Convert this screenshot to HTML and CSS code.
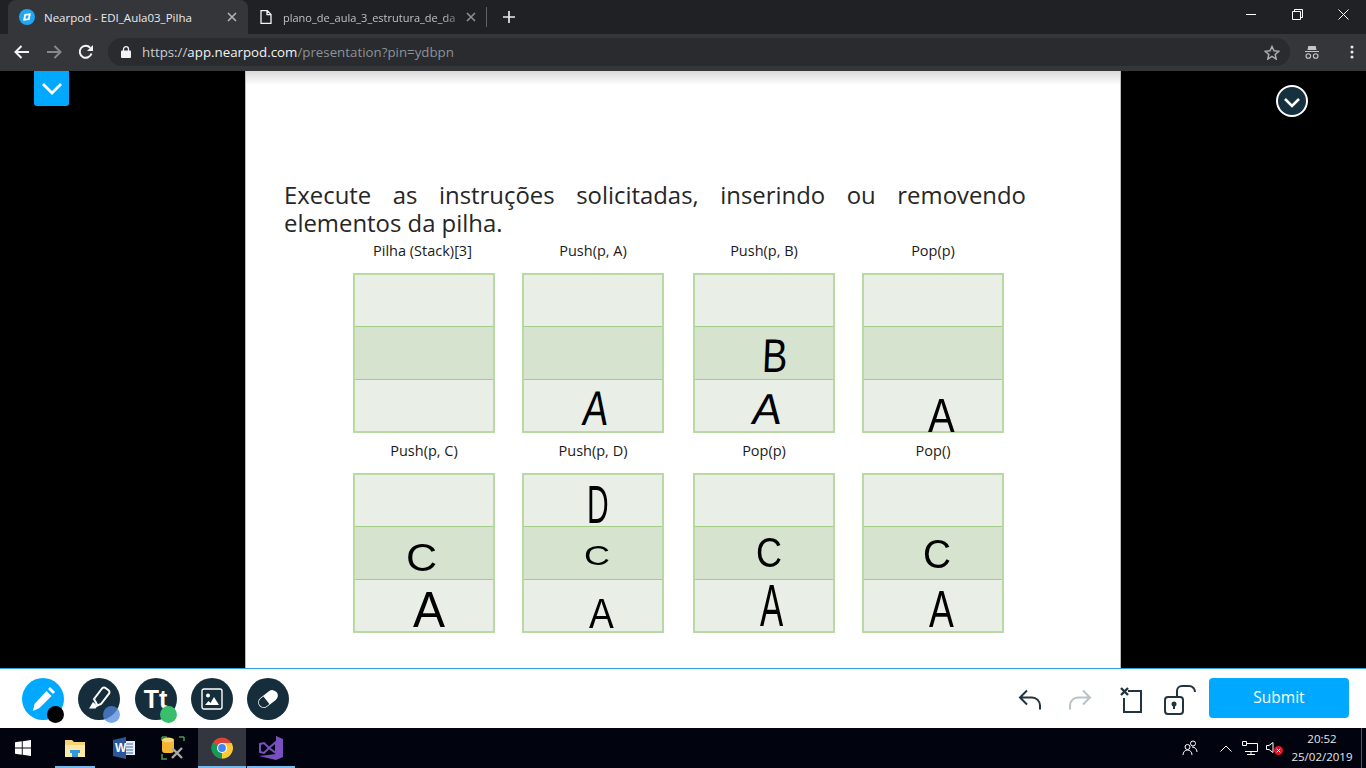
FILE: index.html
```html
<!DOCTYPE html>
<html lang="pt-BR">
<head>
<meta charset="utf-8">
<title>Nearpod - EDI_Aula03_Pilha</title>
<link rel="stylesheet" href="styles.css">
</head>
<body>
<div class="tabstrip">
  <div class="tab active">
    <svg class="favicon" width="16" height="16" viewBox="0 0 16 16"><circle cx="8" cy="8" r="8" fill="#1ea7f5"/><path d="M5.200 10.800l1-5 4.600-.6-1 5z" fill="none" stroke="#fff" stroke-width="1.800"/></svg>
    <span class="tab-title">Nearpod - EDI_Aula03_Pilha</span>
    <svg class="tab-x" width="10" height="10" viewBox="0 0 10 10"><path d="M1 1l8 8M9 1l-8 8" stroke="#b4b7ba" stroke-width="1.600"/></svg>
  </div>
  <div class="tab other">
    <svg class="doc" width="12" height="14" viewBox="0 0 12 14"><path d="M1 .7h6.300L11 4.400v8.900H1zM7 .7v4h4" fill="none" stroke="#f1f3f4" stroke-width="1.300"/></svg>
    <span class="tab-title fade">plano_de_aula_3_estrutura_de_da</span>
    <svg class="tab-x" width="10" height="10" viewBox="0 0 10 10"><path d="M1 1l8 8M9 1l-8 8" stroke="#8d9094" stroke-width="1.600"/></svg>
  </div>
  <span class="tab-sep"></span>
  <svg class="new-tab" width="12" height="12" viewBox="0 0 12 12"><path d="M6 0v12M0 6h12" stroke="#e8eaed" stroke-width="1.700"/></svg>
  <div class="win-controls">
    <svg width="11" height="11" viewBox="0 0 11 11"><path d="M0 5.500h10" stroke="#fff"/></svg>
    <svg width="11" height="11" viewBox="0 0 11 11"><path d="M.5 2.500h8v8h-8zM2.500 2.500v-2h8v8h-2" fill="none" stroke="#fff"/></svg>
    <svg width="11" height="11" viewBox="0 0 11 11"><path d="M.5.500l10 10M10.500.500l-10 10" stroke="#fff"/></svg>
  </div>
</div>
<div class="toolbar">
  <svg class="nav" width="16" height="14" viewBox="0 0 16 14"><path d="M15 7H2M7.500 1L1.500 7l6 6" fill="none" stroke="#f1f3f4" stroke-width="2"/></svg>
  <svg class="nav" width="16" height="14" viewBox="0 0 16 14"><path d="M1 7h13M8.500 1l6 6-6 6" fill="none" stroke="#85888c" stroke-width="2"/></svg>
  <svg class="nav" width="16" height="16" viewBox="0 0 16 16"><path d="M13.500 9.500A6 6 0 1 1 12.300 3.800" fill="none" stroke="#f1f3f4" stroke-width="2"/><path d="M15 1v6H9z" fill="#f1f3f4"/></svg>
  <div class="omnibox">
    <svg class="lock" width="10" height="12" viewBox="0 0 10 12"><path d="M2.500 5V3.200a2.500 2.500 0 0 1 5 0V5" fill="none" stroke="#f1f3f4" stroke-width="1.300"/><rect y="4.500" width="10" height="7.500" rx="1" fill="#f1f3f4"/></svg>
    <span class="url"><span class="url-scheme">https://</span><span class="url-host">app.nearpod.com</span><span class="url-path">/presentation?pin=ydbpn</span></span>
    <svg class="star" width="16" height="15" viewBox="0 0 16 15"><path d="M8 1.500l2 4.300 4.700.5-3.500 3.200 1 4.600L8 11.300l-4.200 2.800 1-4.600-3.500-3.200 4.700-.5z" fill="none" stroke="#a9acb0" stroke-width="1.500"/></svg>
  </div>
  <svg class="incog" width="16" height="14" viewBox="0 0 16 14"><path d="M3.500 5l.8-4h7.400l.8 4zM1 6h14v1H1z" fill="#c4c6c9"/><circle cx="4.300" cy="11" r="2.300" fill="none" stroke="#c4c6c9" stroke-width="1.100"/><circle cx="11.700" cy="11" r="2.300" fill="none" stroke="#c4c6c9" stroke-width="1.100"/></svg>
  <svg class="menu" width="4" height="14" viewBox="0 0 4 14"><circle cx="2" cy="2" r="1.500" fill="#e8eaed"/><circle cx="2" cy="7" r="1.500" fill="#e8eaed"/><circle cx="2" cy="12" r="1.500" fill="#e8eaed"/></svg>
</div>
<main class="stage">
  <div class="side-left">
    <button class="collapse"><svg width="22" height="13" viewBox="0 0 22 13"><path d="M2 2l9 9 9-9" fill="none" stroke="#fff" stroke-width="2.800"/></svg></button>
  </div>
  <section class="slide">
    <p class="prompt">Execute as instruções solicitadas, inserindo ou removendo elementos da pilha.</p>
    <div class="stacks">
      <div class="stack"><div class="label label-first">Pilha (Stack)[3]</div><div class="table"><div class="row"></div><div class="row mid"></div><div class="row"></div></div></div>
      <div class="stack"><div class="label">Push(p, A)</div><div class="table"><div class="row"></div><div class="row mid"></div><div class="row"></div></div></div>
      <div class="stack"><div class="label">Push(p, B)</div><div class="table"><div class="row"></div><div class="row mid"></div><div class="row"></div></div></div>
      <div class="stack"><div class="label">Pop(p)</div><div class="table"><div class="row"></div><div class="row mid"></div><div class="row"></div></div></div>
      <div class="stack"><div class="label">Push(p, C)</div><div class="table"><div class="row"></div><div class="row mid"></div><div class="row"></div></div></div>
      <div class="stack"><div class="label">Push(p, D)</div><div class="table"><div class="row"></div><div class="row mid"></div><div class="row"></div></div></div>
      <div class="stack"><div class="label">Pop(p)</div><div class="table"><div class="row"></div><div class="row mid"></div><div class="row"></div></div></div>
      <div class="stack"><div class="label">Pop()</div><div class="table"><div class="row"></div><div class="row mid"></div><div class="row"></div></div></div>
    </div>
    <span class="ink ink-a1">A</span>
    <span class="ink ink-b2">B</span>
    <span class="ink ink-a2">A</span>
    <span class="ink ink-a3">A</span>
    <span class="ink ink-c4">C</span>
    <span class="ink ink-a4">A</span>
    <span class="ink ink-d5">D</span>
    <span class="ink ink-c5">C</span>
    <span class="ink ink-a5">A</span>
    <span class="ink ink-c6">C</span>
    <span class="ink ink-a6">A</span>
    <span class="ink ink-c7">C</span>
    <span class="ink ink-a7">A</span>
  </section>
  <div class="side-right">
    <button class="round-toggle"><svg width="18" height="11" viewBox="0 0 18 11"><path d="M2 2l7 7 7-7" fill="none" stroke="#fff" stroke-width="2.600"/></svg></button>
  </div>
</main>
<footer class="drawbar">
  <div class="tools">
    <div class="tool pen">
      <svg width="26" height="28" viewBox="0 0 26 28"><path d="M3 26l1.500-7L16.500 6l5 5L9.500 23z" fill="#fff"/><path d="M18 4l2-2 5 5-2 2z" fill="#fff"/></svg>
      <span class="dot dot-black"></span>
    </div>
    <div class="tool">
      <svg width="26" height="28" viewBox="0 0 26 28"><path d="M8 14L16 3.500a2.500 2.500 0 0 1 3.500-.5l3 2.200a2.500 2.500 0 0 1 .5 3.500L15 19l-3.500 1.500z" fill="none" stroke="#fff" stroke-width="2"/><path d="M7 17l4.500 4-2 2.500H3z" fill="#fff"/></svg>
      <span class="dot dot-blue"></span>
    </div>
    <div class="tool"><span class="tt">Tt</span><span class="dot dot-green"></span></div>
    <div class="tool">
      <svg width="22" height="22" viewBox="0 0 22 22"><rect x="1" y="1" width="20" height="20" rx="2" fill="none" stroke="#fff" stroke-width="1.400"/><circle cx="7" cy="7.500" r="2" fill="#fff"/><path d="M4 17l3.500-4 2 2 3.500-6 5 8z" fill="#fff"/></svg>
    </div>
    <div class="tool">
      <svg width="24" height="20" viewBox="0 0 24 20"><g transform="rotate(-38 12 10)"><rect x="1" y="4.500" width="22" height="11" rx="5.500" fill="#fff"/><path d="M10 5.200H6.500a4.800 4.800 0 0 0 0 9.600H10z" fill="#162e3b"/></g></svg>
    </div>
  </div>
  <div class="actions">
    <svg class="act act-undo" width="24" height="24" viewBox="0 0 24 24"><path d="M9 2.500L2 9.500l7 7M2.500 9.500H14a8 8 0 0 1 8 8v4" fill="none" stroke="#22343f" stroke-width="2"/></svg>
    <svg class="act act-redo" width="24" height="24" viewBox="0 0 24 24"><path d="M15 2.500l7 7-7 7M21.500 9.500H10a8 8 0 0 0-8 8v4" fill="none" stroke="#b7c2c6" stroke-width="2"/></svg>
    <svg class="act act-clear" width="22" height="26" viewBox="0 0 22 26"><path d="M8 4h13v21H4V11" fill="none" stroke="#22343f" stroke-width="2"/><path d="M1 1l7 7M8 1L1 8" stroke="#22343f" stroke-width="2.400"/></svg>
    <svg class="act act-lock" width="32" height="30" viewBox="0 0 32 30"><rect x="1" y="12" width="18" height="17" rx="3" fill="none" stroke="#22343f" stroke-width="2"/><path d="M13 12V6a5 5 0 0 1 5-5h7a6 6 0 0 1 6 6" fill="none" stroke="#22343f" stroke-width="2"/><circle cx="10" cy="19" r="2.500" fill="#22343f"/><path d="M9 20h2v4H9z" fill="#22343f"/></svg>
    <button class="submit">Submit</button>
  </div>
</footer>
<footer class="taskbar">
  <div class="task task-start">
    <svg width="16" height="16" viewBox="0 0 16 16"><path d="M0 2.300L6.800 1.300v6.300H0zM7.700 1.200L16 0v7.600H7.700zM0 8.500h6.800v6.200L0 13.800zM7.700 8.500H16V16l-8.300-1.200z" fill="#fff"/></svg>
  </div>
  <div class="task open-stack">
    <svg width="22" height="19" viewBox="0 0 22 19"><path d="M1 1h7l2 2h11v15H1z" fill="#f5d277"/><path d="M1 6h20v12H1z" fill="#fce9a6"/><path d="M6 11h10v3H6z" fill="#2f9bdc"/><path d="M8 14h6v4H8z" fill="#2f9bdc"/></svg>
  </div>
  <div class="task">
    <svg width="22" height="22" viewBox="0 0 22 22"><path d="M9 4h13v14H9z" fill="#e9eef6"/><path d="M11 7h9M11 10h9M11 13h9M11 16h9" stroke="#3b68ad"/><path d="M0 3l13-3v22L0 19z" fill="#2b579a"/><text class="word-w" x="2" y="15">W</text></svg>
  </div>
  <div class="task">
    <svg width="24" height="24" viewBox="0 0 24 24"><path d="M1 1h5M1 1v4M18 1h5M23 1v4M1 18v5h5" fill="none" stroke="#4a9a52" stroke-width="1.500"/><rect x="1" y="3" width="12" height="14" rx="3" fill="#f2b632"/><ellipse cx="7" cy="4" rx="6" ry="2.500" fill="#f8d577"/><path d="M11 22l10-10M21 22L11 12" stroke="#a9a9a9" stroke-width="2.400"/></svg>
  </div>
  <div class="task current">
    <svg width="22" height="22" viewBox="0 0 48 48"><circle cx="24" cy="24" r="23" fill="#db4437"/><path d="M24 24L44 36A23 23 0 0 1 12 43.500z" fill="#0f9d58"/><path d="M24 24L12 43.500A23 23 0 0 1 4 12.500z" fill="#0f9d58"/><path d="M24 13h21A23 23 0 0 1 24 47z" fill="#fcc934"/><circle cx="24" cy="24" r="11" fill="#fff"/><circle cx="24" cy="24" r="8.500" fill="#4285f4"/></svg>
  </div>
  <div class="task open">
    <svg width="24" height="24" viewBox="0 0 24 24"><path d="M17 0l7 3v18l-7 3-17-4 17-2V2z" fill="#7a4fc1"/><path d="M1 8l4-1 5 5 7-6v11l-7-5-5 5-4-1z" fill="none" stroke="#7a4fc1" stroke-width="2"/></svg>
  </div>
  <div class="tray">
    <svg class="tray-people" width="16" height="16" viewBox="0 0 16 16"><circle cx="5.500" cy="7" r="2.500" fill="none" stroke="#fff"/><circle cx="11" cy="3.500" r="2.500" fill="none" stroke="#fff"/><path d="M1 15c0-3 2-5 4.500-5S10 12 10 15M10 7c3 0 5 2 5 5" fill="none" stroke="#fff"/></svg>
    <svg class="tray-up" width="12" height="7" viewBox="0 0 12 7"><path d="M.5 6.500L6 1l5.500 5.500" fill="none" stroke="#fff"/></svg>
    <svg class="tray-net" width="16" height="14" viewBox="0 0 16 14"><path d="M3 2.500h12.500v8H3M9 10.500v3M5 13.500h8" fill="none" stroke="#fff"/><path d="M.5.500h4v4h-4z" fill="#01040f" stroke="#fff"/></svg>
    <svg class="tray-vol" width="17" height="14" viewBox="0 0 17 14"><path d="M.5 4.500h2.500l4-3v10l-4-3H.500z" fill="none" stroke="#fff"/><circle cx="12.500" cy="9.500" r="4.500" fill="#e81123"/><path d="M10.800 7.800l3.400 3.400M14.200 7.800l-3.400 3.400" stroke="#fff"/></svg>
    <div class="clock"><span>20:52</span><span>25/02/2019</span></div>
    <span class="show-desktop"></span>
  </div>
</footer>
</body>
</html>
```
FILE: styles.css
```css
* { box-sizing: border-box; }
html, body { margin: 0; padding: 0; }
body {
  width: 1366px; height: 768px; overflow: hidden;
  display: flex; flex-direction: column;
  background: #000;
  font-family: "Open Sans", "Liberation Sans", sans-serif;
}
button { border: 0; padding: 0; font: inherit; cursor: pointer; }

/* browser chrome */
.tabstrip { height: 34px; background: #202124; display: flex; align-items: flex-end; position: relative; padding-left: 8px; color: #e8eaed; }
.tab { height: 34px; display: flex; align-items: center; position: relative; font-size: 11.500px; }
.tab.active { width: 240px; background: #35363a; border-radius: 8px 8px 0 0; padding-left: 11px; }
.tab.other { width: 238px; padding-left: 12px; font-size: 11px; }
.favicon { flex: none; margin-right: 9px; }
.doc { flex: none; margin-right: 11px; }
.tab-title { white-space: nowrap; flex: 1; }
.tab.other .tab-title { color: #bdc1c6; }
.fade { -webkit-mask-image: linear-gradient(90deg, #000 88%, transparent 100%); mask-image: linear-gradient(90deg, #000 88%, transparent 100%); }
.tab-x { flex: none; margin-right: 11px; }
.tab.other .tab-x { margin-right: 10px; }
.tab-sep { width: 1px; height: 20px; background: #5f6368; align-self: center; }
.new-tab { align-self: center; margin-left: 16px; }
.win-controls { margin-left: auto; align-self: flex-start; display: flex; gap: 35px; padding: 9px 17px 0 0; }

.toolbar { height: 37px; background: #35363a; display: flex; align-items: center; padding: 0 20px 1px 14px; }
.nav { flex: none; margin-right: 16px; }
.nav:nth-child(3) { margin-right: 14px; }
.omnibox { height: 28px; width: 1182px; flex: none; background: #292b2e; border-radius: 14px; display: flex; align-items: center; padding: 0 10px 0 13px; }
.lock { flex: none; margin-right: 11px; }
.url { font-size: 13.300px; white-space: nowrap; color: #f1f3f4; }
.url-scheme { color: #c9ccd0; }
.url-path { color: #8b9298; }
.star { margin-left: auto; }
.incog { flex: none; margin-left: 14px; }
.menu { flex: none; margin-left: 30px; }

/* stage */
.stage { height: 597px; background: #000; display: grid; grid-template-columns: 245px 876px 1fr; border-radius: 5px 5px 0 0; position: relative; }
.collapse { display: flex; align-items: center; justify-content: center; margin-left: 34px; width: 35px; height: 35px; background: #00a9ff; border-radius: 0 0 3px 3px; }
.side-right { padding: 14px 0 0 155px; }
.round-toggle { display: flex; align-items: center; justify-content: center; padding-top: 3px; width: 32px; height: 32px; border-radius: 50%; background: #15303e; border: 2px solid #fff; }

.slide {
  position: relative;
  background: linear-gradient(#d9d9d9, #fff 14px);
  border-left: 1px solid #bbb; border-right: 1px solid #bbb;
  padding: 110px 94px 0 38px;
}
.prompt { margin: 0 0 3px; font-size: 23.900px; line-height: 28px; text-align: justify; color: #262626; }
.stacks { display: grid; grid-template-columns: 169px 171px 169px 142px; row-gap: 7px; margin-left: 69px; }
.stack { width: 142px; }
.label { height: 22px; line-height: 22px; margin-bottom: 11px; text-align: center; font-size: 14.500px; color: #1a1a1a; white-space: nowrap; }
.label-first { padding-right: 3px; }
.table { height: 160px; display: flex; flex-direction: column; border: 2px solid #b8d8a4; }
.row { flex: 1; background: #e9efe7; }
.row.mid { background: #d5e3cf; border-top: 1px solid #a2cd88; border-bottom: 1px solid #a2cd88; }

/* ink written over the slide: slide origin is (245, 71) */
.ink { position: absolute; font-family: "Liberation Sans", sans-serif; font-size: 40px; line-height: 40px; color: #000; transform-origin: 0 5px; }
.ink-a1 { left: 339px; top: 314px; transform: scale(.95, 1.22) skewX(-8deg); }
.ink-b2 { left: 517px; top: 262px; transform: scale(.95, 1.18) skewX(-3deg); }
.ink-a2 { left: 509px; top: 317px; transform: scale(1.1, 1.08) skewX(-8deg); }
.ink-a3 { left: 682px; top: 321px; transform: scale(1, 1.2); }
.ink-c4 { left: 160px; top: 467px; transform: scale(1.08, .95); }
.ink-a4 { left: 167px; top: 514px; transform: scale(1.2, 1.26); }
.ink-d5 { left: 341px; top: 408px; transform: scale(.75, 1.33); }
.ink-c5 { left: 338px; top: 469px; transform: scale(.9, .7); }
.ink-a5 { left: 343px; top: 521px; transform: scale(.93, 1.08); }
.ink-c6 { left: 510px; top: 461px; transform: scale(.9, 1.05); }
.ink-a6 { left: 514px; top: 507px; transform: scale(.87, 1.47); }
.ink-c7 { left: 677px; top: 463px; transform: scale(.97, 1.01); }
.ink-a7 { left: 683px; top: 513px; transform: scale(.93, 1.3); }

/* drawing toolbar */
.drawbar { height: 60px; background: #fff; border-top: 1px solid #2ea3e0; display: flex; align-items: center; justify-content: space-between; padding: 0 17px 2px 22px; }
.tools { display: flex; gap: 14.250px; margin-top: 3px; }
.tool { position: relative; width: 42px; height: 42px; border-radius: 50%; background: #162e3b; display: flex; align-items: center; justify-content: center; }
.tool.pen { background: #00a9ff; }
.tt { font-family: "Liberation Sans", sans-serif; font-weight: 700; font-size: 25px; color: #fff; }
.dot { position: absolute; width: 17px; height: 17px; border-radius: 50%; left: 25px; top: 28px; }
.dot-black { background: #000; }
.dot-blue { background: rgba(82, 136, 222, .75); }
.dot-green { background: #39bf6b; }
.actions { display: flex; align-items: center; }
.act { flex: none; margin-top: 4px; }
.act-undo { margin-right: 26px; }
.act-redo { margin-right: 28px; }
.act-clear { margin-right: 22px; }
.act-lock { margin-right: 13px; }
.submit { width: 140px; height: 40px; padding-bottom: 2px; border-radius: 4px; background: #00a9ff; color: #fff; font-size: 15.500px; }

/* windows taskbar */
.taskbar { height: 40px; background: #01040f; display: flex; color: #e6e6e6; }
.task { width: 49px; height: 40px; display: flex; align-items: center; justify-content: center; position: relative; flex: none; }
.task-start { width: 50px; padding-right: 4px; }
.task.current { background: #33363f; width: 48px; margin-left: 1px; }
.task.open { width: 48px; margin-left: 1px; }
.task.open::after, .task.current::after, .open-stack::after { content: ""; position: absolute; left: 0; right: 0; bottom: 0; height: 2px; background: #76b9ed; }
.open-stack::after { left: 5px; right: 4px; }
.word-w { font-family: "Liberation Sans", sans-serif; font-size: 12px; font-weight: 700; fill: #fff; }
.tray { margin-left: auto; display: flex; align-items: center; }
.tray-people { margin-right: 22px; }
.tray-up { margin-right: 10px; }
.tray-net { margin-right: 8px; }
.tray-vol { margin-right: 4px; }
.clock { display: flex; flex-direction: column; align-items: center; font-size: 11.500px; line-height: 18px; width: 70px; }
.show-desktop { width: 1px; height: 40px; margin: 0 4px; background: #55585f; }
```
